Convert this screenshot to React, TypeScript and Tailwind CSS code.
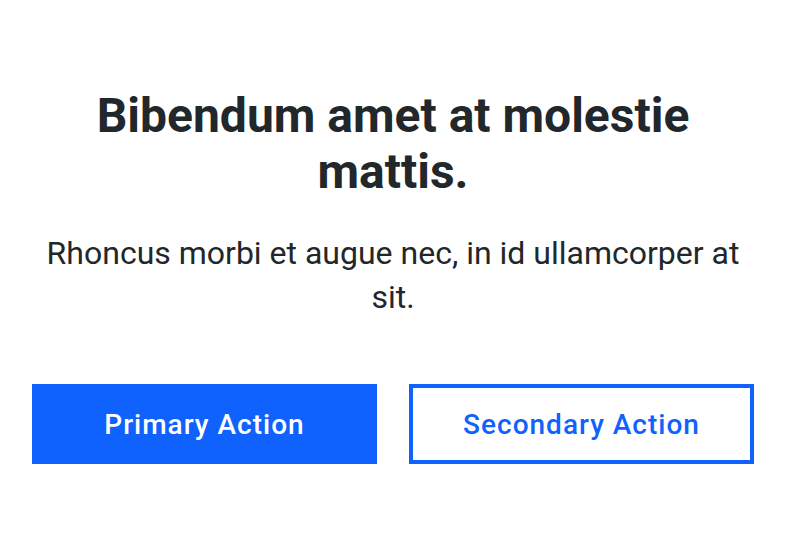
import React from "react";

export default function App() {
  return (
    <div
      className="w-[786px] h-[560px] bg-white flex flex-col items-center px-8 pt-[88px] text-center"
      style={{ fontFamily: "Roboto, sans-serif" }}
    >
      <h1 className="text-[48px] leading-[56px] font-bold text-[#21272a] max-w-[640px]">
        Bibendum amet at molestie mattis.
      </h1>
      <p className="mt-[31px] text-[32px] leading-[44px] text-[#21272a]">
        Rhoncus morbi et augue nec, in id ullamcorper at sit.
      </p>
      <div className="mt-[65px] grid grid-cols-2 gap-8 w-full">
        <button className="h-20 pt-[2px] bg-[#0f62fe] text-white text-[28px] font-medium tracking-[1px]">
          Primary Action
        </button>
        <button className="h-20 pt-[2px] border-4 border-[#0f62fe] bg-white text-[#0f62fe] text-[28px] font-medium tracking-[1px]">
          Secondary Action
        </button>
      </div>
    </div>
  );
}
